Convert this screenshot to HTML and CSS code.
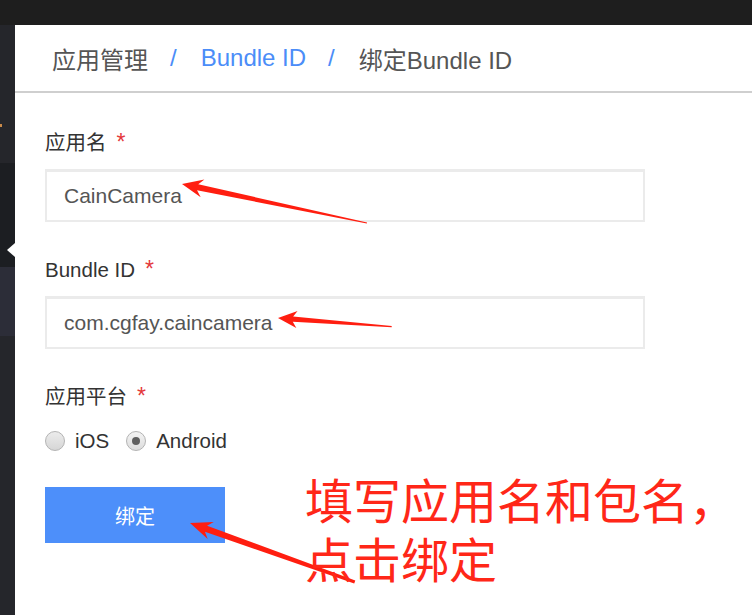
FILE: index.html
```html
<!DOCTYPE html>
<html lang="zh">
<head>
<meta charset="utf-8">
<title>绑定Bundle ID</title>
<link rel="stylesheet" href="styles.css">
</head>
<body>
<div class="topbar"></div>
<div class="layout">
  <aside class="sidebar">
    <div class="sb-block sb-first"><span class="sb-mark"></span></div>
    <div class="sb-block sb-active"><span class="sb-caret"></span></div>
    <div class="sb-block sb-hover"></div>
    <div class="sb-block sb-rest"></div>
  </aside>
  <main class="main">
    <header class="crumbs">
      <span class="crumb">应用管理</span>
      <span class="sep">/</span>
      <span class="crumb link">Bundle ID</span>
      <span class="sep">/</span>
      <span class="crumb">绑定Bundle ID</span>
    </header>
    <section class="form">
      <div class="field">
        <div class="label">应用名<span class="req">*</span></div>
        <input class="input" type="text" value="CainCamera">
      </div>
      <div class="field">
        <div class="label">Bundle ID<span class="req">*</span></div>
        <input class="input" type="text" value="com.cgfay.caincamera">
      </div>
      <div class="field last">
        <div class="label">应用平台<span class="req">*</span></div>
        <div class="radios">
          <span class="radio"></span><span class="rtext">iOS</span>
          <span class="radio checked"></span><span class="rtext">Android</span>
        </div>
      </div>
      <button class="btn" type="button">绑定</button>
    </section>
  </main>
</div>

<svg class="arrows" width="752" height="615" viewBox="0 0 752 615">
  <g fill="#ff1e10">
    <path transform="translate(182,184) rotate(11.9)" d="M0,0 L21,-9 L16,-3 L189,-0.6 L189,0.6 L16,3 L21,9 Z"/>
    <path transform="translate(278,318) rotate(4.3)" d="M0,0 L19,-8.5 L15,-2.6 L114,-0.6 L114,0.6 L15,2.6 L19,8.5 Z"/>
    <path transform="translate(190,523) rotate(19.7)" d="M0,0 L22,-9 L17,-3.2 L175,-1.6 L175,1.6 L17,3.2 L22,9 Z"/>
  </g>
</svg>
<div class="note"><div class="note-line">填写应用名和包名，</div><div class="note-line">点击绑定</div></div>
</body>
</html>
```
FILE: styles.css
```css
* { box-sizing: border-box; }
html, body {
  margin: 0;
  padding: 0;
  background: #fff;
  font-family: "Liberation Sans", "Noto Sans CJK SC", sans-serif;
}
body {
  width: 752px;
  height: 615px;
  overflow: hidden;
  position: relative;
}
.topbar {
  height: 25px;
  background: #1e1e1e;
}
.layout {
  display: flex;
  height: 590px;
}
.sidebar {
  width: 15px;
  flex: none;
  display: flex;
  flex-direction: column;
  background: #25262b;
}
.sb-block { position: relative; }
.sb-first { height: 138px; }
.sb-mark {
  position: absolute;
  left: 0;
  top: 99px;
  width: 2px;
  height: 3px;
  background: #c98a4a;
}
.sb-active { height: 104px; background: #1c1e22; }
.sb-caret {
  position: absolute;
  right: 0;
  top: 80px;
  width: 0;
  height: 0;
  border-top: 7px solid transparent;
  border-bottom: 7px solid transparent;
  border-right: 8px solid #fff;
}
.sb-hover { height: 69px; background: #2c2d38; }
.sb-rest { flex: 1; }

.main {
  flex: 1;
  display: flex;
  flex-direction: column;
}
.crumbs {
  height: 68px;
  border-bottom: 2px solid #cfcfcf;
  display: flex;
  align-items: center;
  padding-left: 37px;
  font-size: 24px;
  color: #555;
}
.crumb.link { color: #4b8df8; }
.sep {
  color: #4b8df8;
  margin: 0 24px 0 22px;
}
.form {
  padding: 36px 0 0 30px;
}
.field { margin-bottom: 34px; }
.field.last { margin-bottom: 0; }
.label {
  font-size: 20.5px;
  line-height: 28px;
  height: 28px;
  color: #333;
  margin-bottom: 12px;
}
.req {
  color: #e4393c;
  margin-left: 10px;
  font-size: 23px;
  line-height: 1;
}
.input {
  display: block;
  width: 600px;
  height: 53px;
  border: 2px solid #ebebeb;
  border-top-width: 3px;
  padding: 0 0 0 17px;
  font-family: "Liberation Sans", "Noto Sans CJK SC", sans-serif;
  font-size: 21px;
  color: #555;
  background: #fff;
  outline: none;
}
.radios {
  display: flex;
  align-items: center;
  height: 28px;
  margin-top: 16px;
  font-size: 20.5px;
  color: #333;
}
.radio {
  width: 20px;
  height: 20px;
  border-radius: 50%;
  border: 1px solid #b3b3b3;
  background: linear-gradient(#ececec, #d6d6d6);
  position: relative;
  margin-right: 10px;
}
.radio.checked {
  background: linear-gradient(#f4f4f4, #dcdcdc);
}
.radio.checked::after {
  content: "";
  position: absolute;
  left: 5px;
  top: 5px;
  width: 8px;
  height: 8px;
  border-radius: 50%;
  background: #5f5f5f;
}
.rtext { margin-right: 17px; }
.btn {
  display: block;
  margin-top: 32px;
  width: 180px;
  height: 56px;
  border: none;
  background: #4d8ffa;
  color: #fff;
  font-family: "Liberation Sans", "Noto Sans CJK SC", sans-serif;
  font-size: 20px;
  padding: 0;
}
.arrows {
  position: absolute;
  left: 0;
  top: 0;
  pointer-events: none;
}
.note {
  position: absolute;
  left: 305px;
  top: 473px;
  font-family: "Liberation Sans", "Noto Sans CJK SC", sans-serif;
  font-size: 48px;
  color: #ff2718;
  white-space: nowrap;
}
.note-line {
  height: 59px;
  line-height: 59px;
}
```
